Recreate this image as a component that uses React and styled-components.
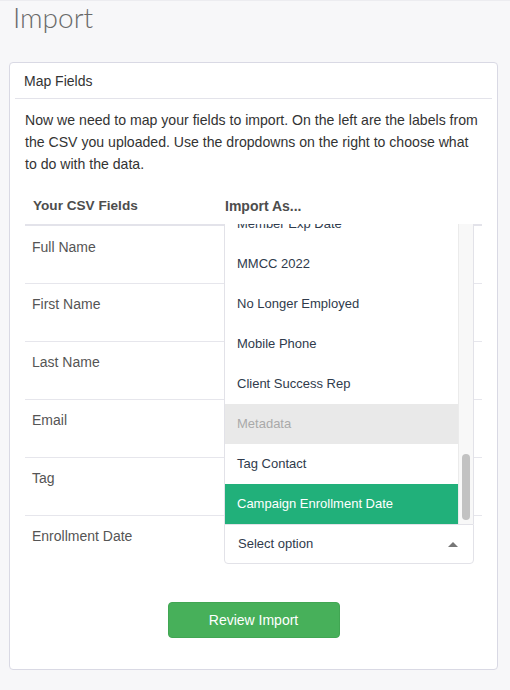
import React from "react";
import styled, { createGlobalStyle } from "styled-components";

const GlobalStyle = createGlobalStyle`
  html, body { margin: 0; padding: 0; }
  body {
    background: #f7f7f9;
    font-family: "Liberation Sans", Arial, Helvetica, sans-serif;
    font-size: 14px;
    color: #333;
    -webkit-font-smoothing: antialiased;
  }
  * { box-sizing: border-box; }
`;

const Page = styled.div`
  min-height: 690px;
  padding: 0 13px 0 9px;
  border-top: 1px solid #ececf0;
`;

const Title = styled.h1`
  margin: 0;
  padding-left: 4px;
  height: 61px;
  font-family: "Lato", "Open Sans", sans-serif;
  font-weight: 300;
  font-size: 28px;
  line-height: 32px;
  color: #6a6a6a;
`;

const Panel = styled.section`
  width: 489px;
  background: #fff;
  border: 1px solid #d9d9e4;
  border-radius: 4px;
`;

const PanelHeader = styled.div`
  margin: 0 5px;
  padding: 8px 9px 7px;
  line-height: 20px;
  font-size: 14px;
  color: #333;
  border-bottom: 1px solid #e3e3ea;
`;

const PanelBody = styled.div`
  padding: 10px 15px 31px;
`;

const Intro = styled.p`
  margin: 0 0 13px;
  font-size: 14.1px;
  line-height: 22px;
  color: #333;
`;

const Table = styled.div`
  display: grid;
  grid-template-columns: 192px 1fr;
`;

const HeadCell = styled.div`
  padding: 8px 8px;
  line-height: 20px;
  font-size: ${(p) => (p.$narrow ? 13.6 : 14)}px;
  font-weight: bold;
  color: #4d4d4d;
  border-bottom: 2px solid #e3e3ea;
`;

const Cell = styled.div`
  position: relative;
  height: ${(p) => (p.$first ? 57 : 58)}px;
  padding: ${(p) => (p.$first ? 11 : 10)}px 8px 8px 7px;
  line-height: 20px;
  color: #555;
  border-top: ${(p) => (p.$first ? "none" : "1px solid #e6e6ec")};
`;

const SelectBox = styled.div`
  position: relative;
  width: 250px;
  margin-top: ${(p) => (p.$first ? -4 : -2)}px;
`;

const Control = styled.div`
  display: flex;
  align-items: center;
  justify-content: space-between;
  height: 40px;
  padding: 0 15px 0 13px;
  border: 1px solid #e2e2e8;
  border-radius: 0 0 4px 4px;
  background: #fff;
  color: #2f3b4c;
  font-size: 13px;
`;

const Caret = styled.span`
  width: 0;
  height: 0;
  border-left: 5px solid transparent;
  border-right: 5px solid transparent;
  border-bottom: 5px solid #777;
`;

const Menu = styled.div`
  position: absolute;
  left: 0;
  right: 0;
  bottom: 40px;
  height: 300px;
  display: flex;
  background: #fff;
  border-left: 1px solid #e2e2e8;
  border-right: 1px solid #e2e2e8;
  z-index: 2;
`;

const OptionViewport = styled.div`
  flex: 1;
  overflow: hidden;
`;

const OptionList = styled.div`
  margin-top: -20px;
`;

const Option = styled.div`
  height: 40px;
  padding: 0 12px;
  line-height: 40px;
  font-size: 13px;
  white-space: nowrap;
  color: ${(p) => (p.$active ? "#fff" : p.$group ? "#a9a9a9" : "#2f3b4c")};
  background: ${(p) => (p.$active ? "#21b07a" : p.$group ? "#e9e9e9" : "#fff")};
`;

const Track = styled.div`
  width: 15px;
  flex: none;
  background: #f8f8f8;
  border-left: 1px solid #ebebeb;
  padding: ${(p) => p.$top}px 0 0 3px;
`;

const Thumb = styled.div`
  width: 8px;
  height: ${(p) => p.$height}px;
  border-radius: 4px;
  background: #c2c2c2;
`;

const Actions = styled.div`
  display: flex;
  justify-content: center;
  margin-top: 29px;
`;

const Button = styled.button`
  width: 172px;
  height: 36px;
  border: 1px solid #41a653;
  border-radius: 4px;
  background: #47b05a;
  color: #fff;
  font-family: "Liberation Sans", Arial, sans-serif;
  font-size: 14px;
  cursor: pointer;
`;

const fields = ["Full Name", "First Name", "Last Name", "Email", "Tag", "Enrollment Date"];

const options = [
  { label: "Member Exp Date" },
  { label: "MMCC 2022" },
  { label: "No Longer Employed" },
  { label: "Mobile Phone" },
  { label: "Client Success Rep" },
  { label: "Metadata", group: true },
  { label: "Tag Contact" },
  { label: "Campaign Enrollment Date", active: true },
];

function Dropdown() {
  return (
    <SelectBox>
      <Menu>
        <OptionViewport>
          <OptionList>
            {options.map((o) => (
              <Option key={o.label} $group={o.group} $active={o.active}>
                {o.label}
              </Option>
            ))}
          </OptionList>
        </OptionViewport>
        <Track $top={230}>
          <Thumb $height={66} />
        </Track>
      </Menu>
      <Control>
        <span>Select option</span>
        <Caret />
      </Control>
    </SelectBox>
  );
}

export default function App() {
  return (
    <>
      <GlobalStyle />
      <Page>
        <Title>Import</Title>
        <Panel>
          <PanelHeader>Map Fields</PanelHeader>
          <PanelBody>
            <Intro>
              Now we need to map your fields to import. On the left are the labels from the CSV you
              uploaded. Use the dropdowns on the right to choose what to do with the data.
            </Intro>
            <Table>
              <HeadCell $narrow>Your CSV Fields</HeadCell>
              <HeadCell>Import As...</HeadCell>
              {fields.map((f, i) => (
                <React.Fragment key={f}>
                  <Cell $first={i === 0}>{f}</Cell>
                  <Cell $first={i === 0}>{i === fields.length - 1 ? <Dropdown /> : null}</Cell>
                </React.Fragment>
              ))}
            </Table>
            <Actions>
              <Button>Review Import</Button>
            </Actions>
          </PanelBody>
        </Panel>
      </Page>
    </>
  );
}
